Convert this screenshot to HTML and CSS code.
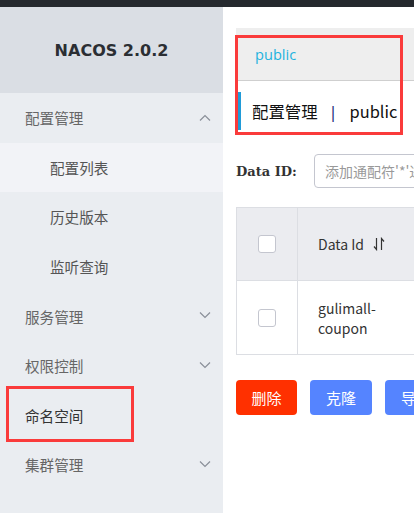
FILE: index.html
```html
<!DOCTYPE html>
<html lang="zh">
<head>
<meta charset="utf-8">
<title>Nacos</title>
<link rel="stylesheet" href="styles.css">
</head>
<body>
<div class="topbar"></div>
<div class="main">
  <aside class="sidebar">
    <div class="brand">NACOS 2.0.2</div>
    <ul class="menu">
      <li class="item top">配置管理
        <svg class="chev" width="12" height="7" viewBox="0 0 12 7"><path d="M1 6.5 L6 1.5 L11 6.5" fill="none" stroke="#8a8f99" stroke-width="1.2"/></svg>
      </li>
      <li class="item sub active">配置列表</li>
      <li class="item sub">历史版本</li>
      <li class="item sub">监听查询</li>
      <li class="item top">服务管理
        <svg class="chev" width="12" height="7" viewBox="0 0 12 7"><path d="M1 0.5 L6 5.5 L11 0.5" fill="none" stroke="#8a8f99" stroke-width="1.2"/></svg>
      </li>
      <li class="item top">权限控制
        <svg class="chev" width="12" height="7" viewBox="0 0 12 7"><path d="M1 0.5 L6 5.5 L11 0.5" fill="none" stroke="#8a8f99" stroke-width="1.2"/></svg>
      </li>
      <li class="item top dark">命名空间</li>
      <li class="item top">集群管理
        <svg class="chev" width="12" height="7" viewBox="0 0 12 7"><path d="M1 0.5 L6 5.5 L11 0.5" fill="none" stroke="#8a8f99" stroke-width="1.2"/></svg>
      </li>
    </ul>
    <div class="mark mark-ns"></div>
  </aside>
  <section class="content">
    <div class="tabs"><span class="tab">public</span></div>
    <div class="page-title">配置管理<span class="sep">|</span>public</div>
    <div class="search">
      <label class="label">Data ID:</label>
      <div class="input">添加通配符'*'进行模糊查询</div>
    </div>
    <div class="table">
      <div class="row head">
        <div class="cell check"><span class="box"></span></div>
        <div class="cell name">Data Id
          <svg class="sort" width="12" height="14" viewBox="0 0 12 14"><path d="M3.5 1 V12.5 L1 9.5" fill="none" stroke="#333" stroke-width="1.2"/><path d="M8.5 13 V1.5 L11 4.5" fill="none" stroke="#333" stroke-width="1.2"/></svg>
        </div>
      </div>
      <div class="row body">
        <div class="cell check"><span class="box"></span></div>
        <div class="cell name">gulimall-<br>coupon</div>
      </div>
    </div>
    <div class="actions">
      <span class="btn danger">删除</span>
      <span class="btn primary">克隆</span>
      <span class="btn primary">导出</span>
    </div>
    <div class="mark mark-title"></div>
  </section>
</div>
</body>
</html>
```
FILE: styles.css
```css
* { box-sizing: border-box; }
html, body { margin: 0; padding: 0; }
body {
  width: 414px;
  height: 513px;
  overflow: hidden;
  background: #fff;
  font-family: "Noto Sans CJK SC", "Noto Sans", sans-serif;
  color: #333;
}
.topbar { height: 7px; background: #25292e; }
.main { display: flex; height: 506px; }
.sidebar {
  position: relative;
  width: 223px;
  flex: 0 0 223px;
  background: #eaedf1;
}
.brand {
  height: 86px;
  background: #dadee4;
  display: flex;
  align-items: center;
  justify-content: center;
  font-family: "DejaVu Sans", sans-serif;
  font-weight: bold;
  font-size: 16px;
  color: #2b2e33;
  padding-top: 1px;
}
.menu { list-style: none; margin: 0; padding: 0; }
.item {
  height: 49.6px;
  display: flex;
  align-items: center;
  font-size: 14.6px;
  color: #666;
  position: relative;
}
.item.top { padding-left: 25px; }
.item.sub { padding-left: 50px; color: #555; }
.item.active { background: #f2f3f7; }
.item.dark { color: #333; }
.chev { position: absolute; right: 12px; top: 21px; }
.mark { position: absolute; border: 3px solid #fa3b3b; }
.mark-ns { left: 6px; top: 379px; width: 128px; height: 56px; }
.content {
  position: relative;
  flex: 1;
  min-width: 0;
  overflow: hidden;
  padding: 21px 0 0 13px;
}
.tabs {
  width: 400px;
  height: 53px;
  background: #eeeeee;
  border-bottom: 1px solid #cfcfcf;
  display: flex;
  align-items: center;
  padding-left: 19px;
}
.tab { color: #1fb3de; font-size: 14.6px; font-family: "Open Sans", "Noto Sans CJK SC", sans-serif; }
.page-title {
  margin-top: 11px;
  height: 38px;
  border-left: 5px solid #209bd8;
  padding-left: 11px;
  display: flex;
  align-items: center;
  font-size: 16.4px;
  color: #111;
  white-space: nowrap;
}
.sep { color: #1a2a7a; margin: 0 12px 0 11px; font-family: "Noto Sans", sans-serif; }
.search {
  margin-top: 24px;
  display: flex;
  align-items: center;
  height: 34px;
  width: 500px;
}
.label {
  flex: 0 0 78px;
  white-space: nowrap;
  font-family: "DejaVu Serif", serif;
  font-weight: bold;
  font-size: 13px;
  color: #333;
}
.input {
  flex: 0 0 300px;
  height: 34px;
  border: 1px solid #c4c6cf;
  border-radius: 4px;
  padding-left: 10px;
  display: flex;
  align-items: center;
  font-size: 14px;
  color: #999;
  white-space: nowrap;
}
.table {
  margin-top: 19px;
  width: 500px;
  border: 1px solid #dcdee3;
}
.row { display: flex; height: 73px; }
.row.head { background: #ebecf0; border-bottom: 1px solid #dcdee3; }
.cell { display: flex; align-items: center; }
.cell.check { flex: 0 0 61px; justify-content: center; border-right: 1px solid #dcdee3; }
.cell.name { padding-left: 20px; font-size: 14px; color: #333; line-height: 20px; }
.box {
  width: 18px; height: 18px;
  border: 1px solid #c4c6cf;
  border-radius: 3px;
  background: #fff;
}
.sort { margin-left: 9px; }
.actions { margin-top: 25px; display: flex; gap: 13px; width: 500px; }
.btn {
  height: 35px;
  width: 61px;
  flex: 0 0 auto;
  border-radius: 4px;
  color: #fff;
  font-size: 15px;
  display: flex;
  align-items: center;
  justify-content: center;
}
.btn.danger { background: #ff3000; }
.btn.primary { background: #5584ff; width: 62px; }
.mark-title { left: 12px; top: 28px; width: 168px; height: 100px; }
```
